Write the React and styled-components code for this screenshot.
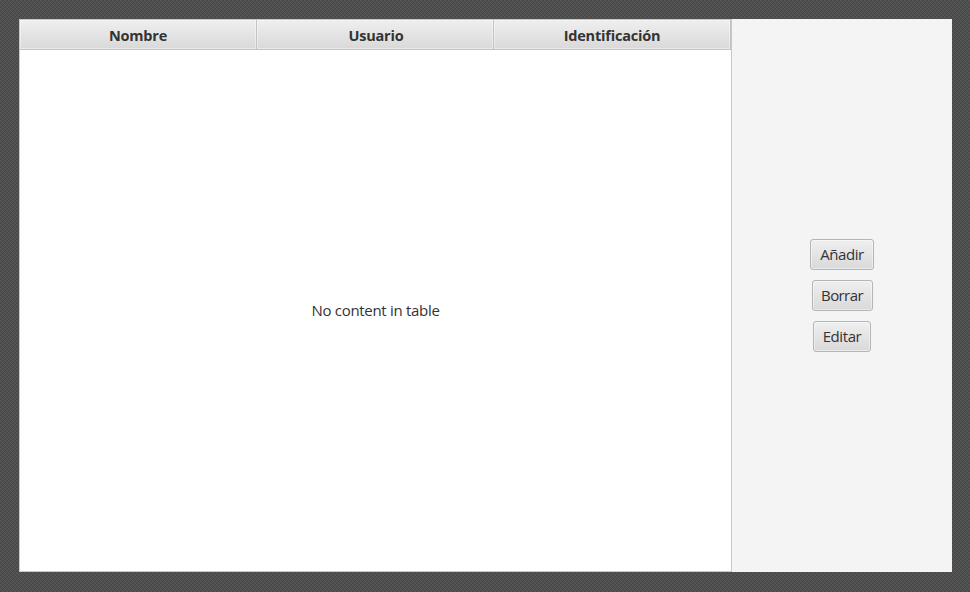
import React from 'react';
import styled, { createGlobalStyle } from 'styled-components';

const GlobalStyle = createGlobalStyle`
  * { box-sizing: border-box; }
  body {
    margin: 0;
    overflow: hidden;
    font-family: "Open Sans", "Noto Sans", sans-serif;
    font-size: 15px;
    color: #333;
  }
`;

const Backdrop = styled.div`
  width: 970px;
  height: 592px;
  padding: 19px 18px 20px 19px;
  background:
    repeating-conic-gradient(rgba(0, 0, 0, 0.16) 0 25%, transparent 0 50%) 0 0 / 2px 2px,
    repeating-conic-gradient(rgba(0, 0, 0, 0.1) 0 25%, transparent 0 50%) 0 0 / 4px 4px,
    #5a5a5a;
`;

const Window = styled.main`
  display: flex;
  height: 553px;
  background: #f4f4f4;
`;

const Table = styled.section`
  display: flex;
  flex-direction: column;
  width: 713px;
  border: 1px solid #c8c8c8;
  background: #fff;
`;

const TableHeader = styled.header`
  display: grid;
  grid-template-columns: 237px 237px 237px;
  height: 30px;
  border-bottom: 1px solid #c3c3c3;
`;

const ColumnTitle = styled.div`
  display: flex;
  align-items: center;
  justify-content: center;
  padding: 2px 0 0 ${(p) => p.$indent}px;
  border-right: 1px solid #c3c3c3;
  background: linear-gradient(#efefef, #d9d9d9);
  box-shadow: inset 0 0 0 1px rgba(255, 255, 255, 0.4);
  font-size: 14.5px;
  font-weight: 700;
  letter-spacing: -0.2px;
`;

const Placeholder = styled.div`
  flex: 1;
  display: flex;
  align-items: center;
  justify-content: center;
  padding-bottom: 2px;
  letter-spacing: -0.3px;
`;

const Actions = styled.aside`
  flex: 1;
  display: flex;
  flex-direction: column;
  align-items: center;
  justify-content: center;
  gap: 10px;
`;

const Button = styled.button`
  width: ${(p) => p.$width}px;
  height: 31px;
  padding: 0 0 1px;
  border: 1px solid #b5b5b5;
  border-radius: 3px;
  background: linear-gradient(#efefef, #d9d9d9);
  box-shadow: inset 0 0 0 1px rgba(255, 255, 255, 0.45);
  color: #333;
  font: inherit;
  white-space: nowrap;
  letter-spacing: ${(p) => p.$tracking}px;
`;

const columns = [
  { title: 'Nombre', indent: 0 },
  { title: 'Usuario', indent: 2 },
  { title: 'Identificación', indent: 0 },
];

const actions = [
  { label: 'Añadir', width: 64, tracking: -0.4 },
  { label: 'Borrar', width: 61, tracking: -0.6 },
  { label: 'Editar', width: 58, tracking: -0.4 },
];

export default function App() {
  return (
    <>
      <GlobalStyle />
      <Backdrop>
        <Window>
          <Table>
            <TableHeader>
              {columns.map((c) => (
                <ColumnTitle key={c.title} $indent={c.indent}>{c.title}</ColumnTitle>
              ))}
            </TableHeader>
            <Placeholder>No content in table</Placeholder>
          </Table>
          <Actions>
            {actions.map((a) => (
              <Button key={a.label} type="button" $width={a.width} $tracking={a.tracking}>
                {a.label}
              </Button>
            ))}
          </Actions>
        </Window>
      </Backdrop>
    </>
  );
}
